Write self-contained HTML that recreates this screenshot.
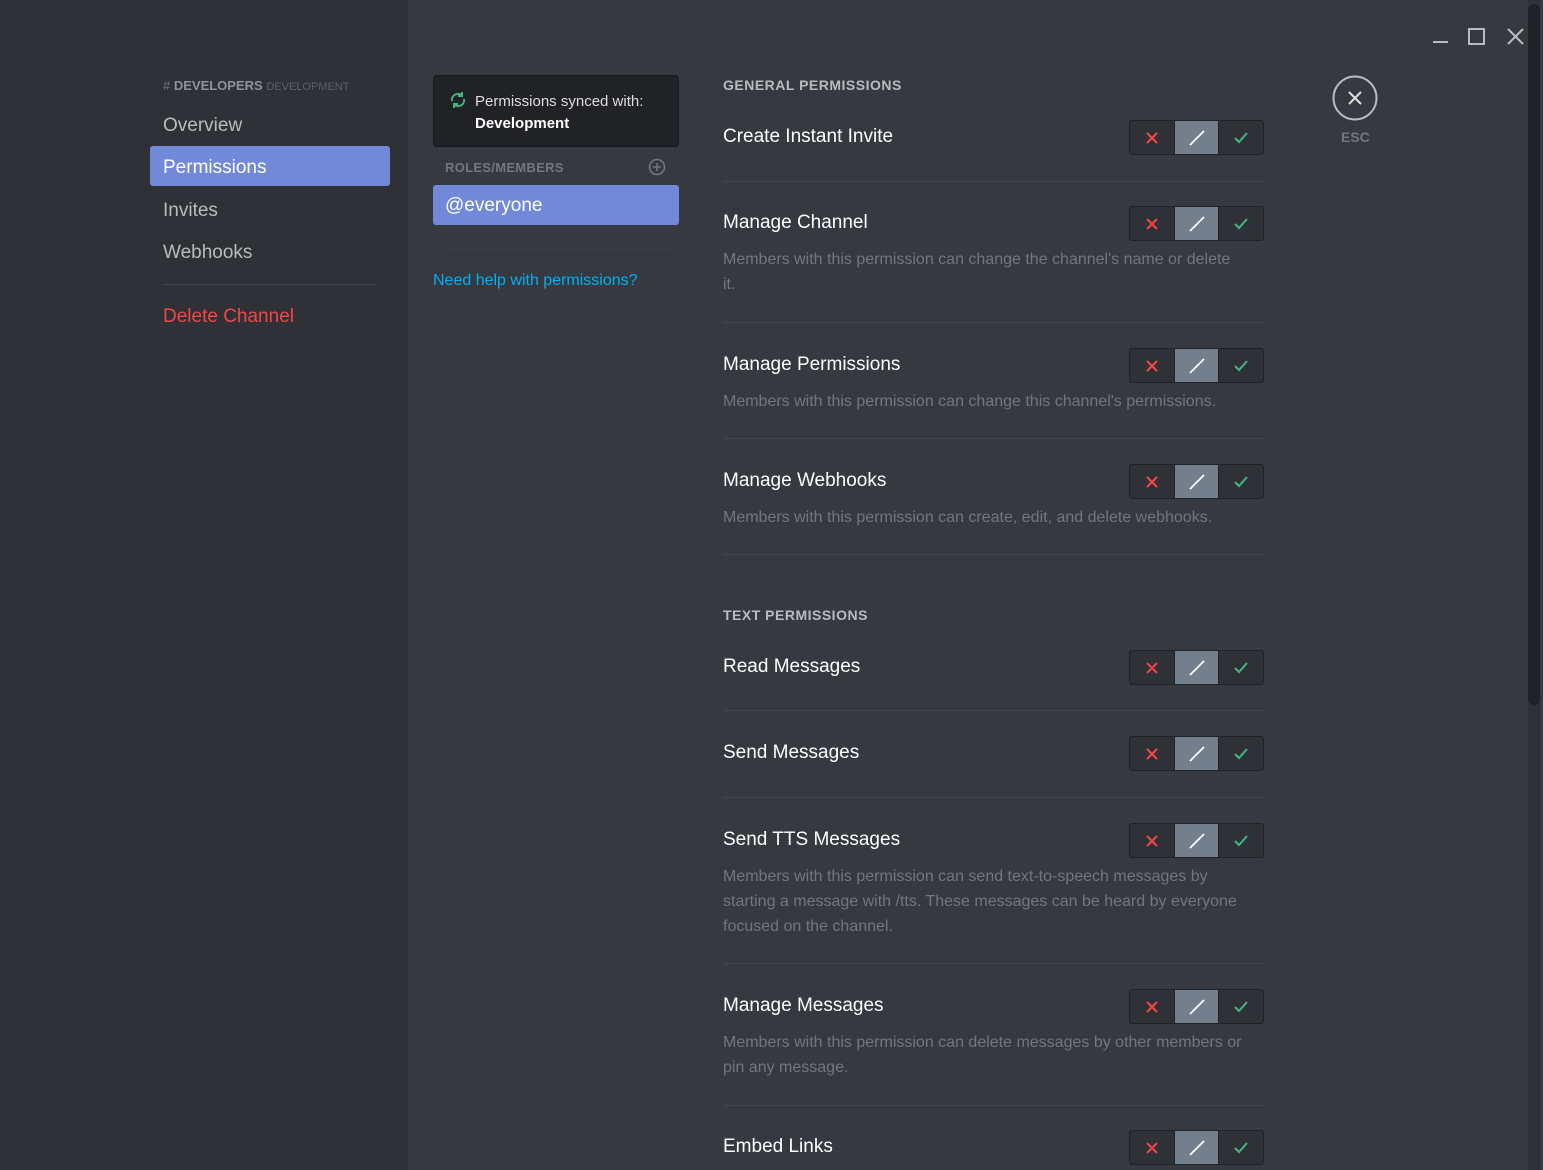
<!DOCTYPE html>
<html><head><style>
*{margin:0;padding:0;box-sizing:border-box}
body{width:1543px;height:1170px;overflow:hidden;background:#36393f;font-family:"Liberation Sans",sans-serif;position:relative}
.a{position:absolute}
.side{left:0;top:0;width:408px;height:1170px;background:#2f3136}
.nav{left:163px;font-size:19px;color:#b9bbbe}
.t{left:723px;font-size:19px;color:#fff}
.d{left:723px;width:528px;font-size:16px;color:#72767d;line-height:25px}
.hr{left:723px;width:541px;height:1px;background:#42454a}
.tg{left:1129px;width:135px;height:35px;border:1px solid #202225;border-radius:3px;display:flex;overflow:hidden;background:#2f3136}
.tg div{flex:1;display:flex;align-items:center;justify-content:center}
.tg div:nth-child(2){background:#747f8d;border-left:1px solid #202225;border-right:1px solid #202225}
.h{left:723px;font-size:14px;font-weight:bold;color:#b9bbbe;letter-spacing:.5px}
</style></head><body>
<div class="a side"></div>
<div class="a" style="left:163px;top:78px;font-size:13px;color:#72767d"># <b style="color:#8e9297">DEVELOPERS</b> <span style="font-size:11px;color:#5c6067">DEVELOPMENT</span></div>
<div class="a nav" style="top:115px">Overview</div>
<div class="a" style="left:150px;top:146px;width:240px;height:40px;background:#7289da;border-radius:3px"></div>
<div class="a nav" style="top:157px;color:#fff">Permissions</div>
<div class="a nav" style="top:200px">Invites</div>
<div class="a nav" style="top:242px">Webhooks</div>
<div class="a" style="left:163px;top:284px;width:213px;height:1px;background:#42454a"></div>
<div class="a nav" style="top:306px;color:#f04747">Delete Channel</div>

<div class="a" style="left:433px;top:75px;width:246px;height:72px;background:#202225;border:1px solid #1a1b1e;border-radius:4px"></div>
<svg class="a" style="left:448px;top:90px" width="20" height="20" viewBox="0 0 20 20" fill="none" stroke="#43b581" stroke-width="2"><path d="M4 11a6 6 0 0 1 10-5.5M16 9a6 6 0 0 1-10 5.5"/><path d="M14 2v4h-4M6 18v-4h4"/></svg>
<div class="a" style="left:475px;top:93px;font-size:15px;color:#dcddde">Permissions synced with:</div>
<div class="a" style="left:475px;top:115px;font-size:15px;font-weight:bold;color:#fff">Development</div>
<div class="a" style="left:445px;top:160px;font-size:13px;font-weight:bold;color:#72767d;letter-spacing:.3px">ROLES/MEMBERS</div>
<svg class="a" style="left:648px;top:158px" width="18" height="18" viewBox="0 0 18 18" fill="none" stroke="#72767d" stroke-width="1.6"><circle cx="9" cy="9" r="7.5"/><path d="M9 5v8M5 9h8"/></svg>
<div class="a" style="left:433px;top:185px;width:246px;height:40px;background:#7289da;border-radius:3px"></div>
<div class="a" style="left:445px;top:195px;font-size:19px;color:#fff">@everyone</div>
<div class="a" style="left:445px;top:249px;width:234px;height:1px;background:#3b3e44"></div>
<div class="a" style="left:433px;top:272px;font-size:16px;color:#00b0f4">Need help with permissions?</div>

<div class="a h" style="top:77px">GENERAL PERMISSIONS</div>
<div class="a h" style="top:607px">TEXT PERMISSIONS</div>

<div class="a t" style="top:126px">Create Instant Invite</div>
<div class="a hr" style="top:181px"></div>
<div class="a t" style="top:212px">Manage Channel</div>
<div class="a d" style="top:247px;width:560px">Members with this permission can change the channel's name or delete<br>it.</div>
<div class="a hr" style="top:322px"></div>
<div class="a t" style="top:354px">Manage Permissions</div>
<div class="a d" style="top:389px">Members with this permission can change this channel's permissions.</div>
<div class="a hr" style="top:438px"></div>
<div class="a t" style="top:470px">Manage Webhooks</div>
<div class="a d" style="top:505px">Members with this permission can create, edit, and delete webhooks.</div>
<div class="a hr" style="top:554px"></div>
<div class="a t" style="top:656px">Read Messages</div>
<div class="a hr" style="top:710px"></div>
<div class="a t" style="top:742px">Send Messages</div>
<div class="a hr" style="top:797px"></div>
<div class="a t" style="top:829px">Send TTS Messages</div>
<div class="a d" style="top:864px">Members with this permission can send text-to-speech messages by starting a message with /tts. These messages can be heard by everyone focused on the channel.</div>
<div class="a hr" style="top:963px"></div>
<div class="a t" style="top:995px">Manage Messages</div>
<div class="a d" style="top:1030px">Members with this permission can delete messages by other members or pin any message.</div>
<div class="a hr" style="top:1105px"></div>
<div class="a t" style="top:1136px">Embed Links</div>

<div id="tgs"></div>
<script>
var tops=[120,206,348,464,650,736,823,989,1130],h='';
tops.forEach(function(t){h+='<div class="a tg" style="top:'+t+'px"><div><svg width="14" height="14" viewBox="0 0 14 14" stroke="#f04747" stroke-width="2"><path d="M2 2l10 10M12 2L2 12"/></svg></div><div><svg width="18" height="18" viewBox="0 0 18 18" stroke="#fff" stroke-width="1.8"><path d="M2 16L16 2"/></svg></div><div><svg width="16" height="14" viewBox="0 0 16 14" fill="none" stroke="#43b581" stroke-width="2"><path d="M2 7l4 4 8-9"/></svg></div></div>';});
document.getElementById('tgs').innerHTML=h;
</script>

<svg class="a" style="left:1332px;top:75px" width="46" height="46" viewBox="0 0 46 46" fill="none" stroke="#b9bbbe"><circle cx="23" cy="23" r="21.5" stroke-width="2"/><path d="M17 17l12 12M29 17L17 29" stroke="#dcddde" stroke-width="2"/></svg>
<div class="a" style="left:1341px;top:129px;font-size:14px;font-weight:bold;color:#72767d">ESC</div>

<svg class="a" style="left:1430px;top:26px" width="100" height="22" fill="none" stroke="#b9bbbe" stroke-width="2"><path d="M3 16h15"/><rect x="39" y="3" width="15" height="15"/><path d="M78 3l15 15M93 3L78 18"/></svg>
<div class="a" style="left:1528px;top:0;width:12px;height:1170px;background:#2f3136"></div>
<div class="a" style="left:1528px;top:4px;width:12px;height:701px;background:#202225;border-radius:6px"></div>
</body></html>
